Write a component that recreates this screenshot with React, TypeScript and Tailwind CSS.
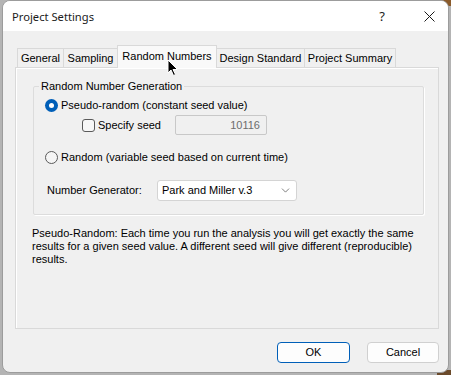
import { ChevronDown } from "lucide-react";

const TABS = [
  { label: "General", w: "w-[47px]" },
  { label: "Sampling", w: "w-[55px]" },
  { label: "Random Numbers", w: "w-[100px]", active: true },
  { label: "Design Standard", w: "w-[89px]" },
  { label: "Project Summary", w: "w-[92px]" },
];

function Radio({ checked }: { checked?: boolean }) {
  if (checked) {
    return (
      <span className="w-[13px] h-[13px] rounded-full bg-[#005fb8] grid place-items-center shrink-0">
        <span className="w-[5px] h-[5px] rounded-full bg-white" />
      </span>
    );
  }
  return (
    <span className="w-[13px] h-[13px] rounded-full border border-[#5a5a5a] bg-[#f5f5f5] shrink-0" />
  );
}

function Cursor() {
  return (
    <svg
      className="absolute left-[167px] top-[59px] z-20"
      width="12"
      height="18"
      viewBox="0 0 12 18"
    >
      <path
        d="M1 1 L1 14 L4 11 L6.5 16.5 L8.5 15.5 L6 10.5 L10.5 10.5 Z"
        fill="#000"
        stroke="#fff"
        strokeWidth="1"
        strokeLinejoin="round"
      />
    </svg>
  );
}

export default function App() {
  return (
    <div
      className="relative w-[451px] h-[375px] overflow-hidden bg-[#b4b4b4] text-[11px] leading-[13px] text-black"
      style={{ fontFamily: '"Liberation Sans", Arial, sans-serif' }}
    >
      {/* desktop bits showing around the window */}
      <div className="absolute right-0 top-0 w-[14px] h-[6px] bg-[#8a5a2b]" />
      <div className="absolute right-0 bottom-0 w-[14px] h-[5px] bg-[#6b4a2a]" />

      <div className="relative ml-[2px] w-[447px] h-[373px] flex flex-col rounded-[8px] border border-[#9c9c9c] overflow-hidden bg-[#f0f0f0]">
        {/* title bar */}
        <div className="h-[30px] bg-white flex items-center pl-[9px] shrink-0">
          <span
            className="text-[11.2px] text-[#1a1a1a] flex-1"
            style={{ fontFamily: '"Noto Sans", "Open Sans", sans-serif' }}
          >
            Project Settings
          </span>
          <span
            className="text-[13px] w-[12px] text-center mr-[36px] text-[#1a1a1a]"
            style={{ fontFamily: '"Noto Sans", sans-serif' }}
          >
            ?
          </span>
          <svg width="11" height="11" viewBox="0 0 11 11" className="mr-[13px]">
            <path d="M0.5 0.5 L10.5 10.5 M10.5 0.5 L0.5 10.5" stroke="#1a1a1a" strokeWidth="1" />
          </svg>
        </div>

        {/* body */}
        <div className="flex-1 flex flex-col pl-[12px] pr-[9px] pt-[14px]">
          {/* tabs */}
          <div className="flex items-end h-[22px] pl-[3px] relative z-10">
            {TABS.map((t) =>
              t.active ? (
                <div
                  key={t.label}
                  className={`${t.w} h-[23px] -ml-px -mb-px border border-b-0 border-[#d9d9d9] bg-[#f9f9f9] flex items-center justify-center pb-[2px]`}
                >
                  {t.label}
                </div>
              ) : (
                <div
                  key={t.label}
                  className={`${t.w} h-[19px] -ml-px border border-b-0 border-[#d9d9d9] bg-[#f0f0f0] flex items-center justify-center`}
                >
                  {t.label}
                </div>
              ),
            )}
          </div>

          {/* tab page */}
          <div className="w-[424px] h-[262px] border border-[#d9d9d9] bg-[#f0f0f0] shadow-[inset_1px_1px_0_#ffffff] pl-[16px] pt-[12px]">
            <fieldset className="ml-px w-[391px] h-[135px] border border-[#dcdcdc] rounded-[2px] p-0 shadow-[1px_1px_0_#ffffff]">
              <legend className="ml-[5px] px-[2px] leading-[13px]">Random Number Generation</legend>

              <div className="flex flex-col">
                <div className="mt-[6px] h-[13px] flex items-center pl-[11px] gap-[3px]">
                  <Radio checked />
                  <span>Pseudo-random (constant seed value)</span>
                </div>

                <div className="mt-[3px] h-[20px] flex items-center pl-[48px]">
                  <span className="w-[13px] h-[13px] rounded-[3px] border border-[#5a5a5a] bg-[#f7f7f7] shrink-0" />
                  <span className="ml-[3px] w-[77px]">Specify seed</span>
                  <div className="w-[92px] h-[20px] border border-[#c8c8c8] rounded-[2px] bg-[#f0f0f0] flex items-center justify-end pr-[6px] text-[#6d6d6d]">
                    10116
                  </div>
                </div>

                <div className="mt-[16px] h-[13px] flex items-center pl-[11px] gap-[3px]">
                  <Radio />
                  <span>Random (variable seed based on current time)</span>
                </div>

                <div className="mt-[16px] h-[21px] flex items-center pl-[13px]">
                  <span className="w-[110px]">Number Generator:</span>
                  <div className="w-[140px] h-[21px] bg-white border border-[#d4d4d4] rounded-[3px] flex items-center pl-[4px] pr-[4px]">
                    <span className="flex-1">Park and Miller v.3</span>
                    <ChevronDown size={13} strokeWidth={1.25} className="text-[#444]" />
                  </div>
                </div>
              </div>
            </fieldset>

            <p className="mt-[12px] leading-[13px]">
              Pseudo-Random: Each time you run the analysis you will get exactly the same
              <br />
              results for a given seed value. A different seed will give different (reproducible)
              <br />
              results.
            </p>
          </div>

          {/* buttons */}
          <div className="flex justify-end gap-[17px] mt-[13px]">
            <button className="w-[73px] h-[21px] rounded-[4px] border border-[#005fb8] bg-[#fdfdfd] text-[11px]">
              OK
            </button>
            <button className="w-[72px] h-[21px] rounded-[4px] border border-[#d0d0d0] bg-[#fdfdfd] text-[11px]">
              Cancel
            </button>
          </div>
        </div>
      </div>

      <Cursor />
    </div>
  );
}
